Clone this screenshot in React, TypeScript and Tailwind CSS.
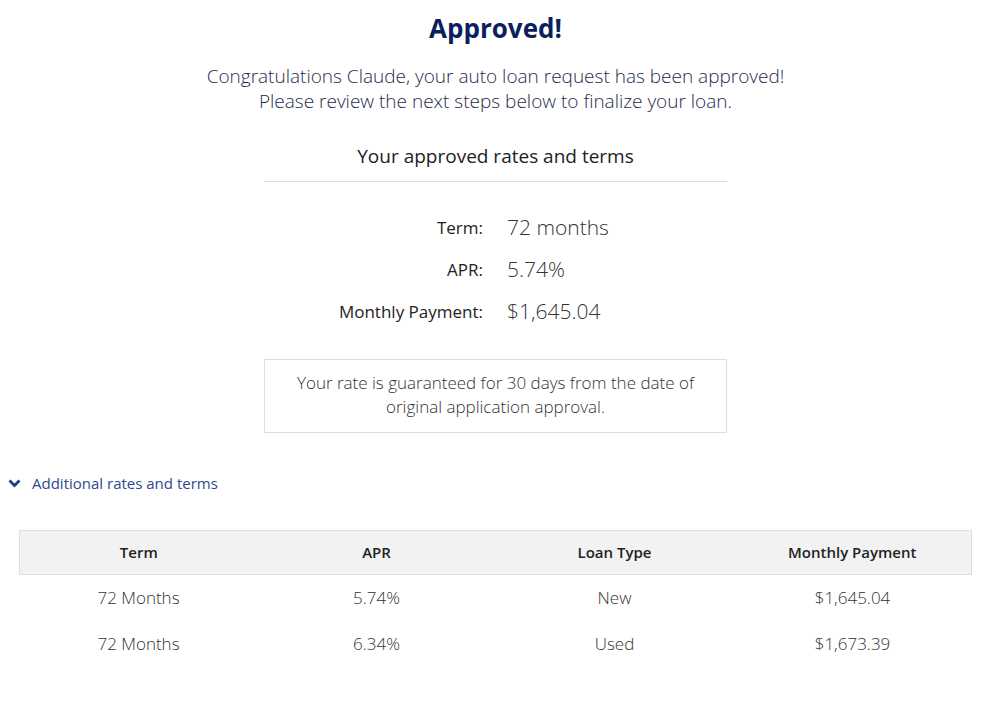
import React from "react";

const rows = [
  { term: "72 Months", apr: "5.74%", type: "New", payment: "$1,645.04" },
  { term: "72 Months", apr: "6.34%", type: "Used", payment: "$1,673.39" },
];

export default function App() {
  return (
    <div
      className="w-[1000px] h-[724px] bg-white text-[#333]"
      style={{ fontFamily: '"Open Sans", "Noto Sans", sans-serif' }}
    >
      <div className="w-[991px] flex flex-col items-center">
        <h1 className="mt-[11px] text-[26px] leading-[34px] font-bold text-[#0b1f5e]">Approved!</h1>
        <p className="mt-[19px] text-center text-[19px] leading-[25px] font-light text-[#1f2b4d]">
          Congratulations Claude, your auto loan request has been approved!
          <br />
          Please review the next steps below to finalize your loan.
        </p>
        <div className="mt-[29px] w-[463px] border-b border-[#dcdcdc] pb-[12px] text-center text-[19px] leading-[26px] text-[#222]">
          Your approved rates and terms
        </div>
        <div className="mt-[31px] w-[463px] flex flex-col gap-[12px]">
          {[
            ["Term:", "72 months"],
            ["APR:", "5.74%"],
            ["Monthly Payment:", "$1,645.04"],
          ].map(([k, v]) => (
            <div key={k} className="flex items-center h-[30px]">
              <div className="w-[219px] text-right text-[17px] text-[#222]">{k}</div>
              <div className="ml-[24px] text-[21px] font-light text-[#333]">{v}</div>
            </div>
          ))}
        </div>
        <div className="mt-[32px] w-[463px] border border-[#dedede] px-4 pt-[11px] pb-[13px] text-center text-[17px] leading-[24px] font-light text-[#333]">
          Your rate is guaranteed for 30 days from the date of
          <br />
          original application approval.
        </div>
      </div>
      <div className="mt-[40px] ml-[8px] flex items-center gap-[11px] text-[#2c4a8e]">
        <svg width="13" height="9" viewBox="0 0 13 9" fill="none">
          <path d="M1.5 1.5 L6.5 6.5 L11.5 1.5" stroke="#1f3d82" strokeWidth="2.8" />
        </svg>
        <span className="text-[15px] leading-[20px]">Additional rates and terms</span>
      </div>
      <table className="mt-[37px] ml-[19px] w-[953px] border-collapse table-fixed">
        <thead>
          <tr className="bg-[#f2f2f2] h-[44px]">
            {["Term", "APR", "Loan Type", "Monthly Payment"].map((h) => (
              <th key={h} className="border-y border-[#dedede] text-[15px] font-semibold text-[#222] first:border-l last:border-r">
                {h}
              </th>
            ))}
          </tr>
        </thead>
        <tbody>
          {rows.map((r, i) => (
            <tr key={i} className="h-[46px] text-[17px] font-light text-[#333]">
              <td className="text-center">{r.term}</td>
              <td className="text-center">{r.apr}</td>
              <td className="text-center">{r.type}</td>
              <td className="text-center">{r.payment}</td>
            </tr>
          ))}
        </tbody>
      </table>
    </div>
  );
}
